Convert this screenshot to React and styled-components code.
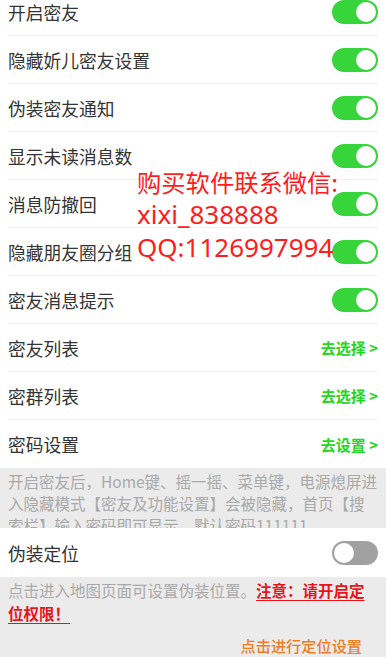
import React, { useState } from "react";
import styled, { createGlobalStyle } from "styled-components";

const GlobalStyle = createGlobalStyle`
  html, body {
    margin: 0;
    padding: 0;
    background: #fff;
    overflow: hidden;
  }
  body {
    font-family: "Noto Sans CJK SC", "Noto Sans", sans-serif;
  }
`;

const Page = styled.div`
  position: relative;
  width: 386px;
  height: 660px;
  overflow: hidden;
  background: #fff;
`;

const Scroller = styled.div`
  margin-top: -12px;
`;

const List = styled.div`
  padding: 0 8px;
`;

const Row = styled.div`
  height: 48px;
  box-sizing: border-box;
  display: flex;
  align-items: center;
  justify-content: space-between;
  border-bottom: ${(p) => (p.last ? "none" : "1px solid #f0f0f0")};
`;

const Label = styled.span`
  font-size: 17.75px;
  color: #333;
`;

const Switch = styled.div`
  position: relative;
  width: 46px;
  height: 24px;
  border-radius: 12px;
  background: ${(p) => (p.on ? "#37d43c" : "#a1a1a1")};
  flex-shrink: 0;
  cursor: pointer;

  &::after {
    content: "";
    position: absolute;
    top: 2px;
    left: ${(p) => (p.on ? "24px" : "2px")};
    width: 20px;
    height: 20px;
    border-radius: 50%;
    background: #fff;
  }
`;

const Action = styled.span`
  font-size: 15px;
  font-weight: 700;
  color: #22d822;
`;

const Note = styled.div`
  background: #ebebeb;
  padding: 2px 8px 0;
  height: 60px;
  box-sizing: border-box;
  overflow: hidden;
  font-size: 15.5px;
  line-height: 22px;
  color: #a9a9a9;
`;

const SubRow = styled.div`
  background: #fff;
  padding: 0 8px;
  height: 49px;
  display: flex;
  align-items: center;
  justify-content: space-between;
`;

const LocNote = styled.div`
  background: #ebebeb;
  padding: 2px 8px 0;
  font-size: 15.5px;
  line-height: 23px;
  color: #a9a9a9;
`;

const Warn = styled.span`
  color: #e8141a;
  font-weight: 700;
  text-decoration: underline;
  text-underline-offset: 3px;
`;

const LocButton = styled.div`
  text-align: right;
  margin-top: 9px;
  padding-right: 16px;
  color: #ee7d25;
  font-size: 15.2px;
  font-weight: 500;
  line-height: 23px;
`;

const Promo = styled.div`
  position: absolute;
  left: 137px;
  top: 165px;
  color: #ff1c1c;
  pointer-events: none;
`;

const PromoLine = styled.div`
  font-family: ${(p) =>
    p.latin ? '"Noto Sans", sans-serif' : '"Noto Sans CJK SC", sans-serif'};
  font-size: ${(p) => (p.latin ? "26px" : "24.3px")};
  line-height: 33px;
  white-space: nowrap;
`;

const toggles = [
  "开启密友",
  "隐藏妡儿密友设置",
  "伪装密友通知",
  "显示未读消息数",
  "消息防撤回",
  "隐藏朋友圈分组",
  "密友消息提示",
];

const links = [
  { label: "密友列表", action: "去选择 >" },
  { label: "密群列表", action: "去选择 >" },
  { label: "密码设置", action: "去设置 >" },
];

export default function App() {
  const [state, setState] = useState(toggles.map(() => true));
  const [fake, setFake] = useState(false);

  return (
    <Page>
      <GlobalStyle />
      <Scroller>
        <List>
          {toggles.map((t, i) => (
            <Row key={t}>
              <Label>{t}</Label>
              <Switch
                on={state[i]}
                onClick={() =>
                  setState(state.map((v, j) => (j === i ? !v : v)))
                }
              />
            </Row>
          ))}
          {links.map((l, i) => (
            <Row key={l.label} last={i === links.length - 1}>
              <Label>{l.label}</Label>
              <Action>{l.action}</Action>
            </Row>
          ))}
        </List>

        <Note>
          开启密友后，Home键、摇一摇、菜单键，电源熄屏进入隐藏模式【密友及功能设置】会被隐藏，首页【搜索栏】输入密码即可显示，默认密码111111
        </Note>

        <SubRow>
          <Label>伪装定位</Label>
          <Switch on={fake} onClick={() => setFake(!fake)} />
        </SubRow>

        <LocNote>
          点击进入地图页面可设置伪装位置。<Warn>注意：请开启定位权限！</Warn>
          <LocButton>点击进行定位设置</LocButton>
        </LocNote>
      </Scroller>

      <Promo>
        <PromoLine>购买软件联系微信:</PromoLine>
        <PromoLine latin>xixi_838888</PromoLine>
        <PromoLine latin>QQ:1126997994</PromoLine>
      </Promo>
    </Page>
  );
}
